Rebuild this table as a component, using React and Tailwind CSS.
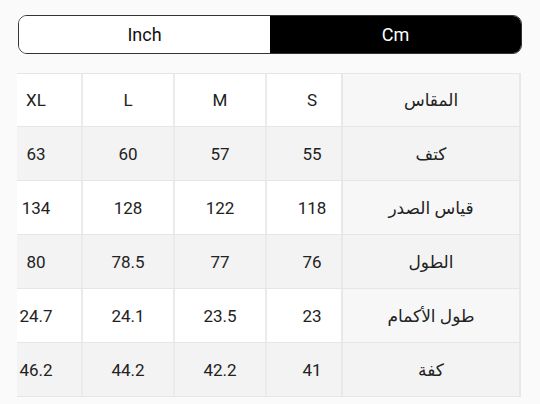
import React from "react";

const sizes = ["S", "M", "L", "XL"];
const rows = [
  { label: "كتف", v: ["55", "57", "60", "63"] },
  { label: "قياس الصدر", v: ["118", "122", "128", "134"] },
  { label: "الطول", v: ["76", "77", "78.5", "80"] },
  { label: "طول الأكمام", v: ["23", "23.5", "24.1", "24.7"] },
  { label: "كفة", v: ["41", "42.2", "44.2", "46.2"] },
];

const font = { fontFamily: 'Roboto, "Noto Sans", "DejaVu Sans", sans-serif' };

function Row({ label, values, gray, header }) {
  const bg = gray ? "bg-[#f3f3f3]" : "bg-white";
  const labelBg = gray ? "bg-[#f3f3f3]" : "bg-[#f7f7f7]";
  return (
    <div className={`flex h-[54px] border-b border-[#e6e6e6] ${header ? "border-t" : ""}`}>
      <div className="flex-1 overflow-hidden flex justify-end">
        <div className="flex shrink-0 w-[368px] mr-[-18px]">
          {[...values].reverse().map((v, i) => (
            <div
              key={i}
              className={`w-[92px] shrink-0 flex items-center justify-center pt-[2px] border-r-2 border-[#ebebeb] ${bg} text-[17px] text-[#222]`}
            >
              {v}
            </div>
          ))}
        </div>
      </div>
      <div
        dir="rtl"
        className={`w-[180px] shrink-0 flex items-center justify-center pt-[2px] border-l-2 border-r-2 border-[#e8e8e8] ${labelBg} text-[17px] text-[#222]`}
      >
        {label}
      </div>
    </div>
  );
}

export default function App() {
  return (
    <div className="w-[540px] h-[404px] bg-[#fafafa] overflow-hidden" style={font}>
      <div className="pt-[15px] pl-[18px] pr-[18px]">
        <div className="flex h-[39px] rounded-[9px] border-[1.5px] border-[#333] overflow-hidden">
          <div className="flex-1 flex items-center justify-center bg-white text-[18px] text-[#111]">Inch</div>
          <div className="flex-1 flex items-center justify-center bg-black text-[18px] text-white">Cm</div>
        </div>
      </div>
      <div className="mt-[19px] ml-[17px] w-[504px]">
        <Row label="المقاس" values={sizes} header />
        {rows.map((r, i) => (
          <Row key={i} label={r.label} values={r.v} gray={i % 2 === 0} />
        ))}
      </div>
    </div>
  );
}
